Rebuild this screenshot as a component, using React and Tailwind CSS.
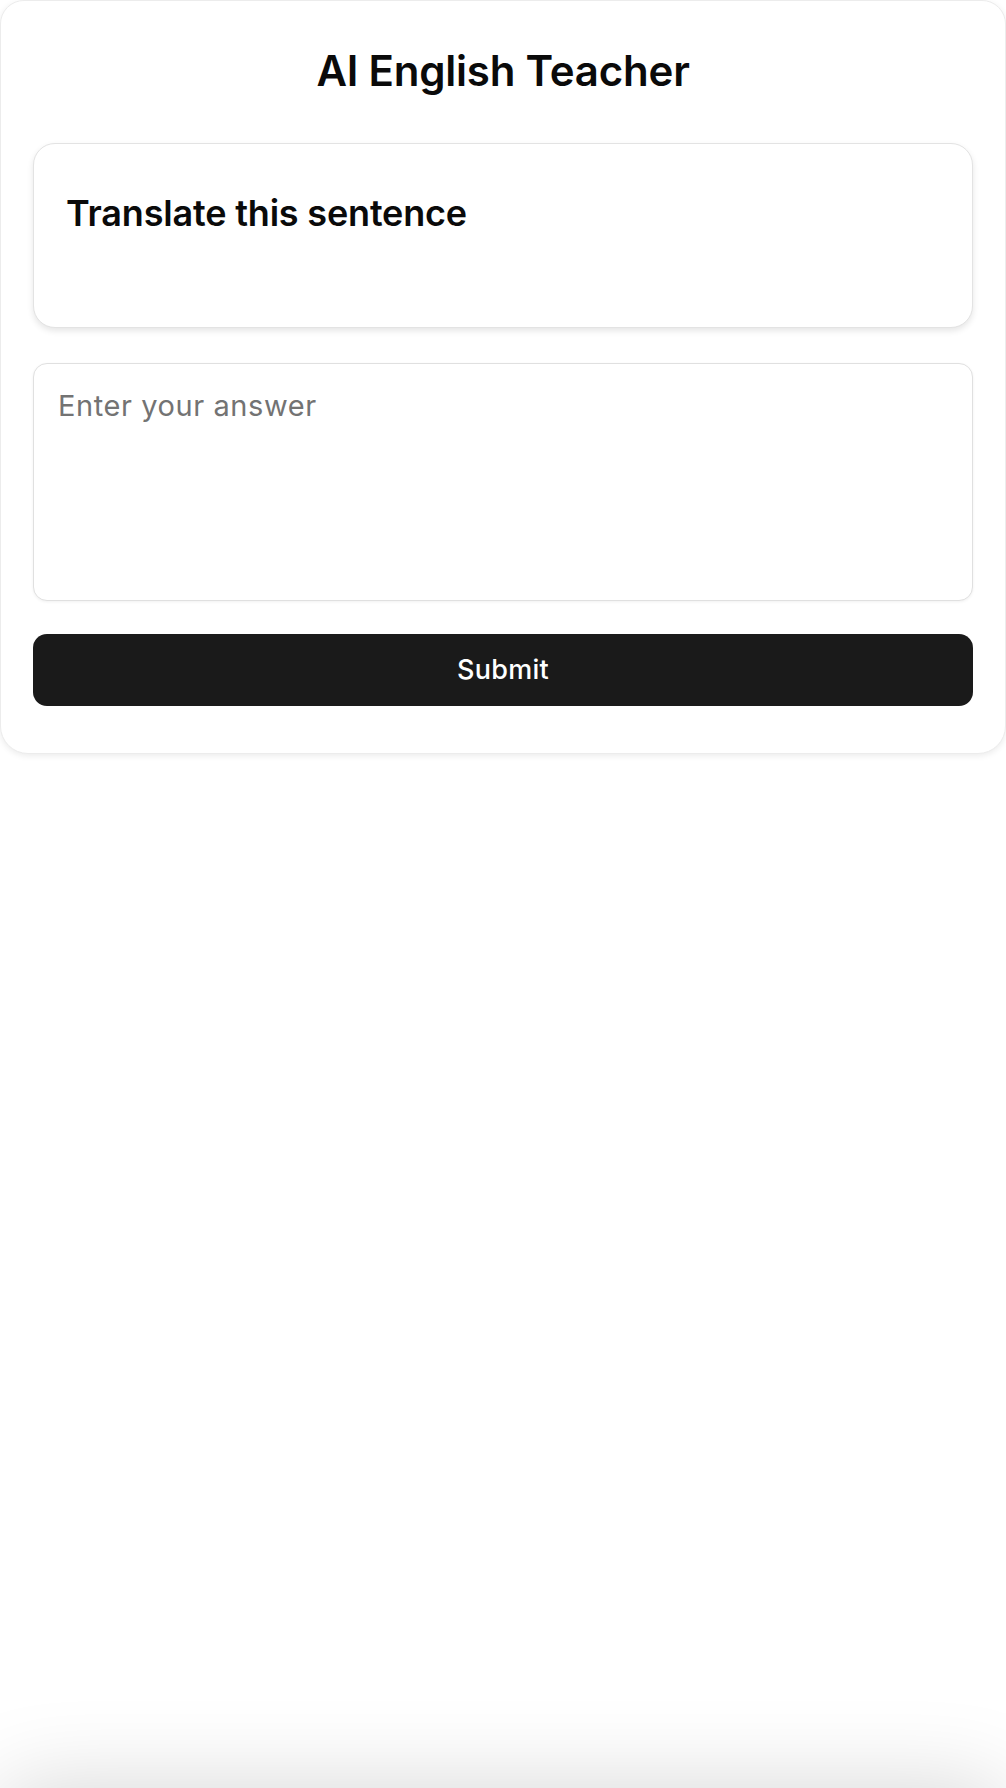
import { useState } from "react";

const App = () => {
  const [answer, setAnswer] = useState("");

  return (
    <div className="min-h-screen bg-white font-['Inter',sans-serif] text-[#0a0a0a]">
      <div className="rounded-b-[28px] rounded-t-[24px] border border-[#ececec] bg-white px-8 pt-[46px] pb-[47px] shadow-[0_2px_6px_rgba(0,0,0,0.08)]">
        <h1 className="text-center text-[42px] leading-[48px] font-semibold tracking-[-0.005em]">
          AI English Teacher
        </h1>

        <div className="mt-[48px] h-[185px] rounded-[22px] border border-[#e3e3e3] bg-white px-8 pt-[49px] shadow-[0_3px_6px_rgba(0,0,0,0.1)]">
          <h2 className="text-[36px] leading-[40px] font-semibold tracking-[-0.005em]">
            Translate this sentence
          </h2>
        </div>

        <textarea
          value={answer}
          onChange={(e) => setAnswer(e.target.value)}
          placeholder="Enter your answer"
          className="mt-[35px] block h-[238px] w-full resize-none rounded-[14px] border border-[#e0e0e0] bg-white p-6 text-[29px] leading-9 tracking-[0.02em] outline-none placeholder:text-[#737373] shadow-[0_1px_3px_rgba(0,0,0,0.06)]"
        />

        <button
          type="button"
          className="mt-[33px] block h-[72px] w-full rounded-[14px] bg-[#1a1a1a] text-[27px] font-medium tracking-[0.01em] text-white"
        >
          Submit
        </button>
      </div>

      <div className="mt-[1034px] h-[300px] rounded-[28px] bg-white shadow-[0_0_90px_rgba(0,0,0,0.17)]" />
    </div>
  );
};

export default App;
